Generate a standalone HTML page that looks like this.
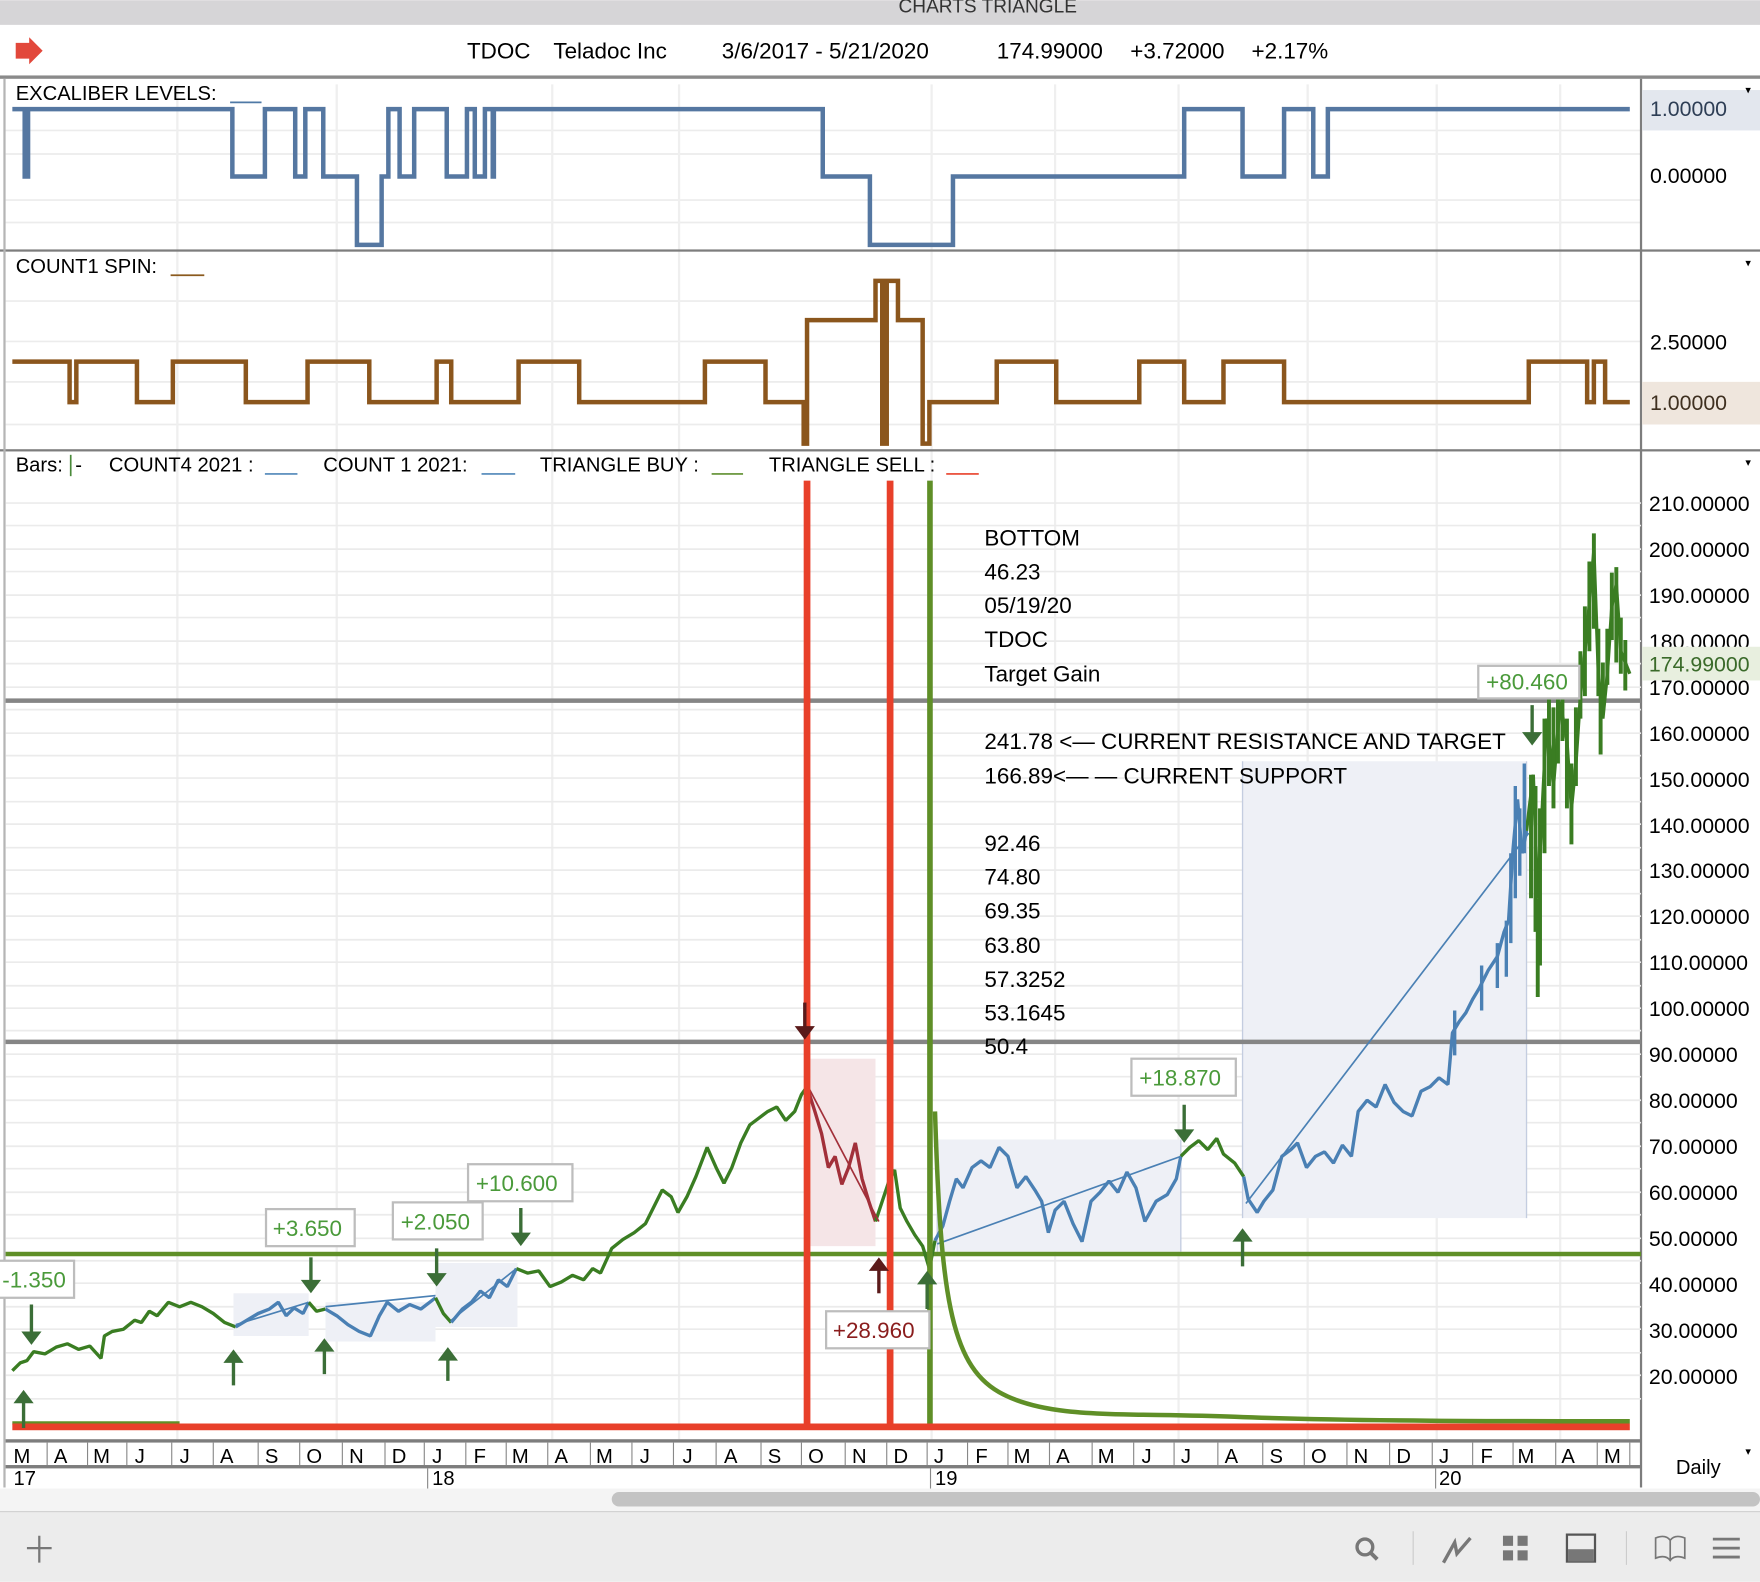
<!DOCTYPE html>
<html><head><meta charset="utf-8"><style>
html,body{margin:0;padding:0;background:#fff;}
svg{display:block;font-family:"Liberation Sans",sans-serif;}
</style></head><body>
<svg width="1760" height="1582" viewBox="0 0 1568 1409" xmlns="http://www.w3.org/2000/svg">
<rect width="1568" height="1409" fill="#fff"/>
<rect x="0" y="0" width="1568" height="22" fill="#d6d5d7"/>
<text x="880" y="11" font-size="17" text-anchor="middle" fill="#333">CHARTS TRIANGLE</text>
<rect x="0" y="22" width="1568" height="46" fill="#fff"/>
<path d="M14,38 H26 V33 L38,45 L26,57 V52 H14 Z" fill="#e2483b"/>
<g font-size="20" fill="#000">
<text x="416" y="52">TDOC</text><text x="493" y="52">Teladoc Inc</text>
<text x="643" y="52">3/6/2017 - 5/21/2020</text>
<text x="888" y="52">174.99000</text><text x="1007" y="52">+3.72000</text><text x="1115" y="52">+2.17%</text>
</g>
<rect x="0" y="67" width="1568" height="3" fill="#8a8a8a"/>
<g stroke="#ececec" stroke-width="1.5">
<path d="M5,116H1462M5,137H1462M5,178H1462M5,198H1462"/>
<path d="M5,268H1462M5,304H1462M5,340H1462M5,378H1462"/>
</g>
<g stroke="#efefef" stroke-width="2">
<path d="M158,75V1282M300,75V1282M492,75V1282M605,75V1282M830,75V1282M940,75V1282M1050,75V1282M1165,75V1282M1280,75V1282M1390,75V1282"/>
</g>
<rect x="0" y="222" width="1568" height="2" fill="#7d7d7d"/>
<rect x="0" y="400" width="1568" height="2" fill="#7d7d7d"/>
<rect x="1461" y="70" width="2" height="1255" fill="#7d7d7d"/>
<rect x="3" y="70" width="2" height="1255" fill="#b5b5b5"/>
<rect x="1463" y="80" width="105" height="36" fill="#e3e7ee"/>
<rect x="1463" y="340" width="105" height="38" fill="#efe6dd"/>
<g font-size="19" fill="#000">
<text x="1470" y="103" fill="#2e3e55">1.00000</text>
<text x="1470" y="163">0.00000</text>
<text x="1470" y="311">2.50000</text>
<text x="1470" y="365" fill="#3f3020">1.00000</text>
</g>
<g font-size="10" fill="#000"><text x="1555" y="83">▾</text><text x="1555" y="237">▾</text><text x="1555" y="415">▾</text></g>
<text x="14" y="89" font-size="18">EXCALIBER LEVELS:</text><path d="M205,91H233" stroke="#4f79a6" stroke-width="1.5"/>
<text x="14" y="243" font-size="18">COUNT1 SPIN:</text><path d="M152,245H182" stroke="#8b5a1e" stroke-width="1.5"/>
<path d="M11,97 H22 V157 H25 V97 H207 V157 H236 V97 H263 V157 H272 V97 H288 V157 H318 V218 H340 V157 H346 V97 H356 V157 H369 V97 H398 V157 H416 V97 H423 V157 H432 V97 H439 V157 H440 V97 H733 V157 H775 V218 H849 V157 H1055 V97 H1107 V157 H1144 V97 H1170 V157 H1183 V97 H1452" fill="none" stroke="#5577a1" stroke-width="4"/>
<path d="M11,322 H62 V358 H68 V322 H122 V358 H154 V322 H219 V358 H274 V322 H329 V358 H389 V322 H402 V358 H462 V322 H516 V358 H628 V322 H682 V358 H716 V395 H719 V285 H780 V250 H786 V395 H790 V250 H800 V285 H822 V395 H828 V358 H888 V322 H941 V358 H1015 V322 H1055 V358 H1090 V322 H1144 V358 H1362 V322 H1414 V358 H1420 V322 H1430 V358 H1452" fill="none" stroke="#8b561d" stroke-width="4"/>
<g stroke="#ebebeb" stroke-width="1.5">
<path d="M5,448H1462M5,468H1462M5,489H1462M5,509H1462M5,530H1462M5,550H1462M5,571H1462M5,591H1462M5,612H1462M5,632H1462M5,653H1462M5,673H1462M5,693H1462M5,714H1462M5,734H1462M5,755H1462M5,775H1462M5,796H1462M5,816H1462M5,837H1462M5,857H1462M5,878H1462M5,898H1462M5,918H1462M5,939H1462M5,959H1462M5,980H1462M5,1000H1462M5,1021H1462M5,1041H1462M5,1062H1462M5,1082H1462M5,1103H1462M5,1123H1462M5,1143H1462M5,1164H1462M5,1184H1462M5,1205H1462M5,1225H1462M5,1246H1462"/>
</g>
<g font-size="18" fill="#000">
<text x="14" y="420">Bars:</text><path d="M63,405V424" stroke="#4a8a3a" stroke-width="1.5"/><text x="67" y="420">-</text>
<text x="97" y="420">COUNT4 2021 :</text><path d="M236,422H265" stroke="#4f86b8" stroke-width="1.5"/>
<text x="288" y="420">COUNT 1 2021:</text><path d="M429,422H459" stroke="#4f86b8" stroke-width="1.5"/>
<text x="481" y="420">TRIANGLE BUY :</text><path d="M634,422H662" stroke="#5f8f2f" stroke-width="1.5"/>
<text x="685" y="420">TRIANGLE SELL :</text><path d="M843,422H872" stroke="#e8402a" stroke-width="1.5"/>
</g>
<g fill="#eef0f6">
<rect x="208" y="1152" width="67" height="38"/><rect x="290" y="1160" width="98" height="35"/><rect x="388" y="1125" width="73" height="57"/>
<rect x="835" y="1015" width="217" height="100"/><rect x="1107" y="678" width="253" height="407"/>
</g>
<rect x="722" y="943" width="58" height="167" fill="#f5e5e7"/>
<g stroke="#c4cde0" stroke-width="1.2"><path d="M1107,678V1085M1360,678V1085M1052,1015V1115M835,1015V1115"/></g>
<rect x="5" y="622" width="1457" height="4" fill="#858585"/>
<rect x="5" y="926" width="1457" height="4" fill="#858585"/>
<rect x="5" y="1115" width="1457" height="4" fill="#5f8f27"/>
<g font-size="20" fill="#000">
<text x="877" y="486">BOTTOM</text><text x="877" y="516">46.23</text><text x="877" y="546">05/19/20</text><text x="877" y="576">TDOC</text><text x="877" y="607">Target Gain</text>
<text x="877" y="667">241.78 &lt;— CURRENT RESISTANCE AND TARGET</text>
<text x="877" y="698">166.89&lt;— — CURRENT SUPPORT</text>
<text x="877" y="758">92.46</text><text x="877" y="788">74.80</text><text x="877" y="818">69.35</text><text x="877" y="849">63.80</text><text x="877" y="879">57.3252</text><text x="877" y="909">53.1645</text><text x="877" y="939">50.4</text>
</g>
<g fill="none" stroke-width="3" stroke-linejoin="bevel">
<polyline stroke="#3a7d22" points="11,1221 18,1214 24,1212 30,1204 40,1206 50,1200 60,1197 70,1202 80,1199 90,1210 93,1190 100,1186 110,1184 120,1176 126,1178 133,1168 140,1172 150,1160 160,1164 170,1160 180,1164 190,1170 200,1178 210,1182"/>
<polyline stroke="#4a80b4" points="210,1182 220,1176 230,1170 240,1166 248,1160 255,1172 262,1165 270,1170 275,1160"/>
<polyline stroke="#3a7d22" points="275,1160 282,1168 290,1166"/>
<polyline stroke="#4a80b4" points="290,1166 300,1172 310,1180 320,1186 330,1190 338,1172 345,1160 355,1168 365,1162 375,1166 388,1156"/>
<polyline stroke="#3a7d22" points="388,1156 395,1170 402,1178"/>
<polyline stroke="#4a80b4" points="402,1178 412,1166 420,1160 428,1150 436,1156 444,1140 452,1146 460,1130"/>
<polyline stroke="#3a7d22" points="460,1130 470,1134 480,1132 490,1146 500,1142 510,1136 520,1140 528,1130 535,1134 545,1112 555,1104 565,1098 575,1090 580,1080 590,1060 598,1066 604,1080 612,1066 620,1048 630,1022 638,1040 645,1054 652,1040 660,1018 668,1002 676,996 684,990 692,986 700,998 708,990 714,975 719,968"/>
<polyline stroke="#a2303a" points="719,968 726,990 732,1010 738,1040 744,1030 750,1055 756,1040 762,1018 768,1050 774,1070 780,1088"/>
<polyline stroke="#3a7d22" points="780,1088 786,1070 792,1052 797,1042 802,1076 808,1088 815,1100 822,1110 828,1130 833,1105"/>
<polyline stroke="#4a80b4" points="833,1105 840,1092 846,1070 852,1050 858,1058 866,1040 874,1034 882,1040 890,1022 898,1030 906,1058 914,1048 922,1060 928,1070 934,1098 940,1078 948,1070 956,1090 964,1106 972,1070 980,1062 988,1052 996,1062 1004,1044 1012,1058 1020,1088 1030,1070 1040,1064 1048,1050 1052,1030"/>
<polyline stroke="#3a7d22" points="1052,1030 1060,1022 1068,1016 1076,1024 1084,1014 1090,1028 1100,1036 1108,1048"/>
<polyline stroke="#4a80b4" points="1108,1048 1112,1068 1120,1080 1126,1070 1134,1060 1142,1030 1150,1024 1156,1018 1164,1040 1172,1030 1180,1026 1188,1036 1196,1020 1204,1030 1210,990 1218,980 1226,986 1234,966 1242,982 1250,990 1258,994 1266,972 1274,968 1282,960 1290,966 1294,920 1300,910 1306,902 1312,890 1318,880 1326,864 1334,852 1340,830 1344,820 1348,756 1352,712 1356,760 1360,740"/>
<polyline stroke="#3a7d22" points="1360,740 1366,690 1370,800 1374,720 1378,640 1384,700 1390,625 1396,660 1400,720 1404,680 1408,620 1414,560 1420,490 1424,600 1428,640 1432,600 1436,540 1440,520 1444,580 1448,590 1452,600"/>
</g>
<g stroke="#4a80b4" stroke-width="3"><path d="M1342,820V870M1346,760V840M1350,700V800M1354,720V780M1358,680V760M1296,900V940M1320,860V900M1334,840V880"/></g>
<g stroke="#3a7d22" stroke-width="3.5"><path d="M1364,690V800M1368,700V830M1370,800V888M1372,720V860M1376,640V760M1380,620V700M1384,630V720M1388,610V680M1392,620V660M1396,640V720M1400,680V752M1404,630V700M1408,580V640M1412,540V620M1416,500V580M1420,475V560M1424,560V620M1426,620V672M1428,590V630M1432,560V610M1436,510V570M1440,505V590M1444,550V600M1448,570V615"/></g>
<g fill="none" stroke-width="1.5">
<path d="M835,1108 L1052,1030" stroke="#4a80b4"/>
<path d="M1110,1072 L1362,742" stroke="#4a80b4"/>
<path d="M720,968 L783,1088" stroke="#a2303a"/>
<path d="M402,1176 L460,1130" stroke="#4a80b4"/>
<path d="M290,1164 L388,1154" stroke="#4a80b4"/>
<path d="M210,1180 L275,1160" stroke="#4a80b4"/>
</g>
<rect x="716" y="428" width="6" height="845" fill="#e8402a"/>
<rect x="790" y="428" width="6" height="845" fill="#e8402a"/>
<rect x="826" y="428" width="5" height="845" fill="#5f8f27"/>
<path d="M833,990 C838,1150 846,1215 890,1240 S1000,1258 1100,1262 S1350,1266 1452,1266" fill="none" stroke="#5f8f27" stroke-width="4"/>
<rect x="11" y="1266" width="149" height="3" fill="#5f8f27"/>
<rect x="11" y="1268" width="1441" height="6" fill="#e8402a"/>
<g fill="#3b6e37" stroke="#3b6e37">
<g stroke-width="3"><path d="M21,1244V1272M208,1208V1234M289,1198V1224M399,1206V1230M826,1138V1166M1107,1100V1128"/></g>
<g stroke="none"><path d="M12,1250L21,1238L30,1250Z M199,1214L208,1202L217,1214Z M280,1204L289,1192L298,1204Z M390,1212L399,1200L408,1212Z M817,1144L826,1132L835,1144Z M1098,1106L1107,1094L1116,1106Z"/></g>
<g stroke-width="3"><path d="M28,1162V1190M277,1120V1144M389,1112V1138M464,1076V1102M1055,984V1010M1365,628V656"/></g>
<g stroke="none"><path d="M19,1186L28,1198L37,1186Z M268,1140L277,1152L286,1140Z M380,1134L389,1146L398,1134Z M455,1098L464,1110L473,1098Z M1046,1006L1055,1018L1064,1006Z M1356,652L1365,664L1374,652Z"/></g>
</g>
<g fill="#5a1a1a" stroke="#5a1a1a">
<path d="M717,893V918" stroke-width="3"/><path d="M708,914L717,926L726,914Z" stroke="none"/>
<path d="M783,1128V1152" stroke-width="3"/><path d="M774,1132L783,1120L792,1132Z" stroke="none"/>
</g>
<g fill="#fff" stroke="#bdbdbd" stroke-width="2">
<rect x="1317" y="593" width="90" height="29"/><rect x="1008" y="943" width="93" height="33"/>
<rect x="417" y="1037" width="93" height="33"/><rect x="350" y="1071" width="80" height="33"/>
<rect x="237" y="1077" width="79" height="33"/><rect x="-2" y="1123" width="68" height="33"/>
<rect x="736" y="1168" width="92" height="33"/>
</g>
<g font-size="20" fill="#4a9a3a">
<text x="1324" y="614">+80.460</text><text x="1015" y="967">+18.870</text><text x="424" y="1061">+10.600</text>
<text x="357" y="1095">+2.050</text><text x="243" y="1101">+3.650</text><text x="2" y="1147">-1.350</text>
</g>
<text x="742" y="1192" font-size="20" fill="#8a1d1d">+28.960</text>
<g font-size="19" fill="#000">
<text x="1469" y="455">210.00000</text><text x="1469" y="496">200.00000</text><text x="1469" y="537">190.00000</text><text x="1469" y="578">180.00000</text>
<text x="1469" y="619">170.00000</text><text x="1469" y="660">160.00000</text><text x="1469" y="701">150.00000</text><text x="1469" y="742">140.00000</text>
<text x="1469" y="782">130.00000</text><text x="1469" y="823">120.00000</text><text x="1469" y="864">110.00000</text><text x="1469" y="905">100.00000</text>
<text x="1469" y="946">90.00000</text><text x="1469" y="987">80.00000</text><text x="1469" y="1028">70.00000</text><text x="1469" y="1069">60.00000</text>
<text x="1469" y="1110">50.00000</text><text x="1469" y="1151">40.00000</text><text x="1469" y="1192">30.00000</text><text x="1469" y="1233">20.00000</text>
</g>
<rect x="1463" y="576" width="105" height="30" fill="#e8efdf"/>
<text x="1469" y="598" font-size="19" fill="#3a6a2a">174.99000</text>
<rect x="5" y="1282" width="1457" height="3" fill="#7d7d7d"/>
<rect x="5" y="1305" width="1457" height="3" fill="#7d7d7d"/>
<g stroke="#888" stroke-width="1"><path d="M42,1285V1305M78,1285V1305M113,1285V1305M153,1285V1305M190,1285V1305M230,1285V1305M267,1285V1305M305,1285V1305M343,1285V1305M378,1285V1305M415,1285V1305M451,1285V1305M488,1285V1305M526,1285V1305M563,1285V1305M600,1285V1305M638,1285V1305M678,1285V1305M714,1285V1305M753,1285V1305M790,1285V1305M826,1285V1305M862,1285V1305M898,1285V1305M935,1285V1305M973,1285V1305M1010,1285V1305M1046,1285V1305M1085,1285V1305M1125,1285V1305M1162,1285V1305M1200,1285V1305M1238,1285V1305M1276,1285V1305M1312,1285V1305M1348,1285V1305M1386,1285V1305M1423,1285V1305M1452,1285V1305"/>
<path d="M381,1308V1326M829,1308V1326M1279,1308V1326"/></g>
<g font-size="18" fill="#000">
<text x="12" y="1303">M</text><text x="48" y="1303">A</text><text x="83" y="1303">M</text><text x="120" y="1303">J</text><text x="160" y="1303">J</text><text x="196" y="1303">A</text><text x="236" y="1303">S</text><text x="273" y="1303">O</text><text x="311" y="1303">N</text><text x="349" y="1303">D</text>
<text x="385" y="1303">J</text><text x="422" y="1303">F</text><text x="456" y="1303">M</text><text x="494" y="1303">A</text><text x="531" y="1303">M</text><text x="570" y="1303">J</text><text x="608" y="1303">J</text><text x="645" y="1303">A</text><text x="684" y="1303">S</text><text x="720" y="1303">O</text><text x="759" y="1303">N</text><text x="796" y="1303">D</text>
<text x="832" y="1303">J</text><text x="869" y="1303">F</text><text x="903" y="1303">M</text><text x="941" y="1303">A</text><text x="978" y="1303">M</text><text x="1017" y="1303">J</text><text x="1052" y="1303">J</text><text x="1091" y="1303">A</text><text x="1131" y="1303">S</text><text x="1168" y="1303">O</text><text x="1206" y="1303">N</text><text x="1244" y="1303">D</text>
<text x="1282" y="1303">J</text><text x="1319" y="1303">F</text><text x="1352" y="1303">M</text><text x="1391" y="1303">A</text><text x="1429" y="1303">M</text>
<text x="12" y="1323">17</text><text x="385" y="1323">18</text><text x="833" y="1323">19</text><text x="1282" y="1323">20</text>
<text x="1493" y="1313">Daily</text>
</g>
<text x="1555" y="1296" font-size="10">▾</text>
<rect x="0" y="1326" width="1568" height="20" fill="#f4f4f4"/>
<rect x="545" y="1329" width="1023" height="13" rx="6.5" fill="#c3c3c3"/>
<rect x="0" y="1346" width="1568" height="63" fill="#ececec"/>
<rect x="0" y="1346" width="1568" height="1" fill="#d0d0d0"/>
<g stroke="#777" stroke-width="2" fill="none">
<path d="M24,1379H46M35,1368V1392"/>
<circle cx="1216" cy="1378" r="7" stroke-width="3"/><path d="M1221,1383L1227,1389" stroke-width="3.5"/>
<path d="M1259,1364V1394M1449,1364V1394" stroke="#ccc" stroke-width="1"/>
<path d="M1286,1392L1296,1374L1298,1384L1310,1370" stroke-width="3"/>
<path d="M1475,1370C1480,1368 1485,1368 1488,1372C1491,1368 1496,1368 1501,1370V1388C1496,1386 1491,1386 1488,1390C1485,1386 1480,1386 1475,1388Z" stroke-width="1.5"/>
<path d="M1488,1372V1390" stroke-width="1.5"/>
<path d="M1526,1371H1550M1526,1379H1550M1526,1387H1550" stroke-width="2.5"/>
</g>
<g fill="#777"><rect x="1339" y="1368" width="9" height="9"/><rect x="1352" y="1368" width="9" height="9"/><rect x="1339" y="1381" width="9" height="9"/><rect x="1352" y="1381" width="9" height="9"/>
<rect x="1396" y="1367" width="25" height="24" fill="none" stroke="#555" stroke-width="2"/><rect x="1397" y="1380" width="23" height="11"/></g>
</svg>
</body></html>
